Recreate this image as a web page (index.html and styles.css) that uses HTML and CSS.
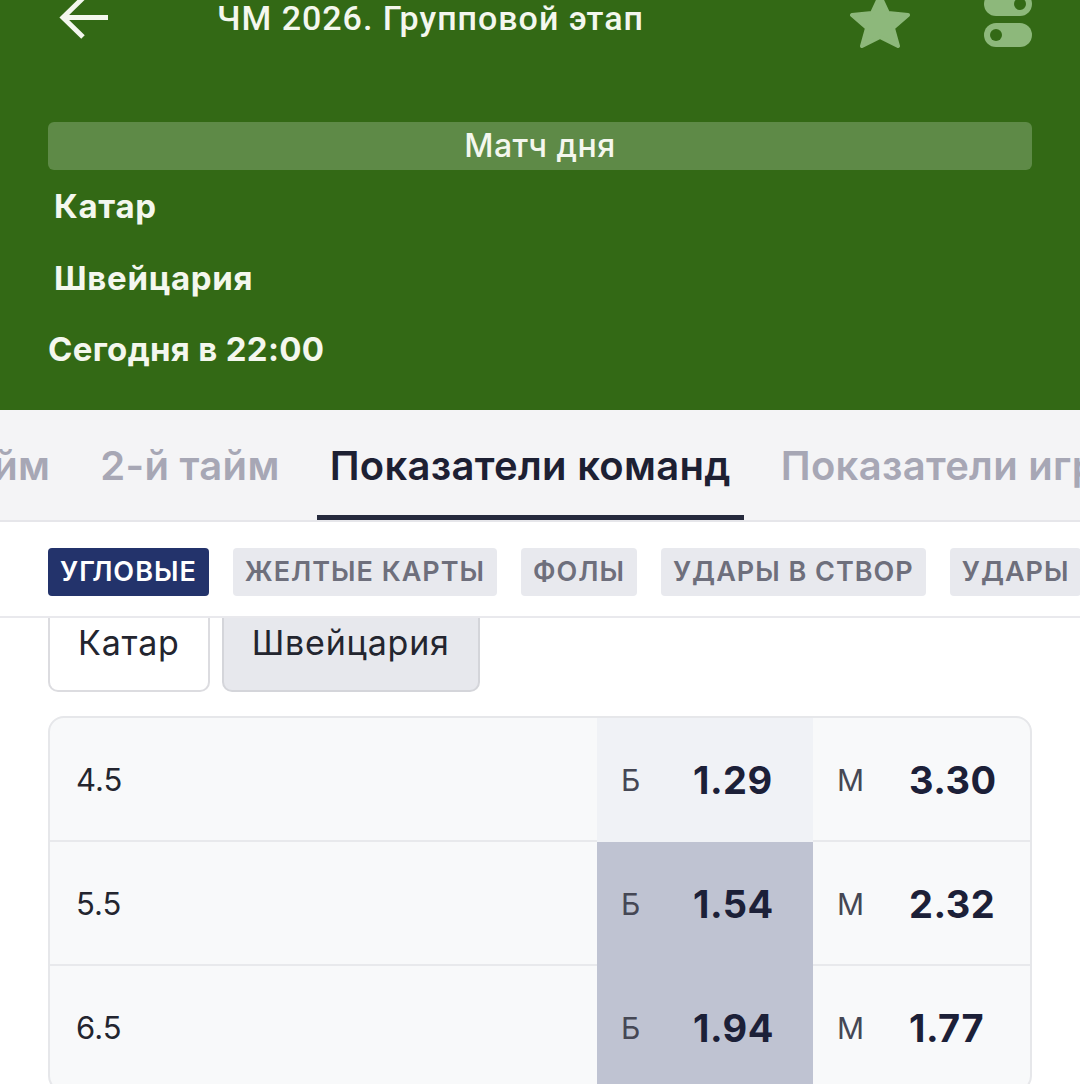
FILE: index.html
```html
<!DOCTYPE html>
<html lang="ru">
<head>
<meta charset="utf-8">
<link rel="stylesheet" href="styles.css">
</head>
<body>
<div class="page">
  <header class="hero">
    <div class="topbar">
      <svg class="back" width="50" height="44" viewBox="0 0 50 44">
        <path d="M50 19.5H6M25 0L5 19.5L25 39" fill="none" stroke="#f4f7ee" stroke-width="5" stroke-linejoin="miter"/>
      </svg>
      <div class="title">ЧМ 2026. Групповой этап</div>
      <div class="spacer"></div>
      <svg class="star" width="62" height="48" viewBox="0 0 62 48">
        <polygon points="31,-4 39,13 59,15 44,28 49,46 31,37 13,46 18,28 3,15 23,13" fill="#8db87b" stroke="#8db87b" stroke-width="4" stroke-linejoin="round"/>
      </svg>
      <svg class="toggle" width="48" height="48" viewBox="0 0 48 48">
        <rect x="0" y="-8" width="48" height="24" rx="12" fill="#8db87b"/>
        <circle cx="36" cy="4" r="6" fill="#336915"/>
        <rect x="0" y="23" width="48" height="24" rx="12" fill="#8db87b"/>
        <circle cx="12" cy="35" r="6" fill="#336915"/>
      </svg>
    </div>
    <div class="daybar">Матч дня</div>
    <div class="team">Катар</div>
    <div class="team">Швейцария</div>
    <div class="when">Сегодня в 22:00</div>
  </header>

  <nav class="tabs">
    <div class="tabs-track">
      <div class="tab">1-й тайм</div>
      <div class="tab">2-й тайм</div>
      <div class="tab active">Показатели команд</div>
      <div class="tab">Показатели игроков</div>
    </div>
  </nav>

  <div class="chips">
    <div class="chip active">УГЛОВЫЕ</div>
    <div class="chip">ЖЕЛТЫЕ КАРТЫ</div>
    <div class="chip">ФОЛЫ</div>
    <div class="chip">УДАРЫ В СТВОР</div>
    <div class="chip">УДАРЫ</div>
  </div>

  <div class="content">
    <div class="teamtabs">
      <div class="teamtab">Катар</div>
      <div class="teamtab selected">Швейцария</div>
    </div>

    <div class="market">
      <div class="row">
        <div class="line">4.5</div>
        <div class="odd soft"><span class="k">Б</span><span class="v">1.29</span></div>
        <div class="odd"><span class="k">М</span><span class="v">3.30</span></div>
      </div>
      <div class="row">
        <div class="line">5.5</div>
        <div class="odd hl"><span class="k">Б</span><span class="v">1.54</span></div>
        <div class="odd"><span class="k">М</span><span class="v">2.32</span></div>
      </div>
      <div class="row">
        <div class="line">6.5</div>
        <div class="odd hl"><span class="k">Б</span><span class="v">1.94</span></div>
        <div class="odd"><span class="k">М</span><span class="v">1.77</span></div>
      </div>
    </div>
  </div>
</div>
</body>
</html>
```

FILE: styles.css
```css
* { box-sizing: border-box; }
html, body { margin: 0; padding: 0; }
body {
  width: 1080px;
  height: 1084px;
  overflow: hidden;
  background: #ffffff;
  font-family: Inter, "Noto Sans", sans-serif;
  color: #1d2033;
}
.page { width: 1080px; }

.hero {
  background: #336915;
  height: 410px;
  padding: 0 48px;
  color: #f4f7ee;
}
.topbar {
  display: flex;
  align-items: flex-start;
  height: 48px;
  margin-left: 10px;
}
.back { display: block; margin-top: -2px; }
.title {
  margin-left: 109px;
  font-family: Roboto, sans-serif;
  font-weight: 500;
  font-size: 34px;
  letter-spacing: 1px;
  line-height: 38px;
  margin-top: -1px;
}
.spacer { flex: 1; }
.star { display: block; margin-right: 73px; }
.toggle { display: block; }

.daybar {
  margin-top: 74px;
  height: 48px;
  border-radius: 6px;
  background: #5e8a47;
  text-align: center;
  font-size: 32px;
  font-weight: 500;
  letter-spacing: 0.5px;
  line-height: 48px;
}
.team {
  margin-left: 6px;
  font-size: 33px;
  font-weight: 700;
  letter-spacing: 0.7px;
  line-height: 36px;
  margin-top: 18px;
}
.team + .team { margin-top: 36px; }
.when {
  font-size: 33px;
  font-weight: 700;
  letter-spacing: 0.3px;
  line-height: 36px;
  margin-top: 35px;
}

.tabs {
  background: #f4f4f6;
  height: 112px;
  border-bottom: 2px solid #e6e6ea;
  overflow: hidden;
}
.tabs-track {
  display: flex;
  gap: 24px;
  margin-left: -134px;
  height: 110px;
}
.tab {
  white-space: nowrap;
  padding: 32px 13px 0;
  font-size: 40px;
  font-weight: 600;
  letter-spacing: 0.3px;
  color: #a7a7b5;
  line-height: 48px;
  border-bottom: 5px solid transparent;
}
.tab.active {
  color: #1d2033;
  border-bottom-color: #262a3d;
}

.chips {
  display: flex;
  gap: 24px;
  padding: 26px 0 0 48px;
  height: 96px;
  border-bottom: 2px solid #e9e9ed;
  overflow: hidden;
}
.chip {
  flex: none;
  height: 48px;
  padding: 0 12px;
  border-radius: 4px;
  background: #e8e9ee;
  color: #6e6f7c;
  font-family: Inter, sans-serif;
  font-weight: 600;
  font-size: 27px;
  letter-spacing: 1px;
  line-height: 48px;
  white-space: nowrap;
}
.chip.active { background: #23336b; color: #ffffff; }

.content { padding: 0 48px; }
.teamtabs { display: flex; gap: 12px; }
.teamtab {
  height: 74px;
  padding: 0 28px;
  border: 2px solid #dcdce0;
  border-top: none;
  border-radius: 0 0 10px 10px;
  background: #ffffff;
  font-size: 34px;
  letter-spacing: 0.8px;
  line-height: 50px;
  color: #23252f;
}
.teamtab.selected {
  background: #e7e8ed;
  border-color: #d4d5da;
}

.market {
  margin-top: 24px;
  border: 2px solid #e6e7ea;
  border-radius: 16px;
  background: #f8f9fa;
  overflow: hidden;
}
.row {
  display: grid;
  grid-template-columns: 547px 216px 1fr;
  height: 124px;
  border-bottom: 2px solid #e8e9ec;
}
.line {
  padding-left: 26px;
  font-size: 31px;
  line-height: 124px;
  color: #23252f;
}
.odd {
  display: flex;
  align-items: center;
  padding-left: 24px;
}
.odd.soft { background: #f0f2f6; }
.odd.hl { background: #bfc3d2; }
.k {
  width: 72px;
  font-size: 30px;
  color: #454754;
}
.v {
  font-size: 38px;
  font-weight: 700;
  letter-spacing: 0.5px;
  color: #1c2038;
}
```
